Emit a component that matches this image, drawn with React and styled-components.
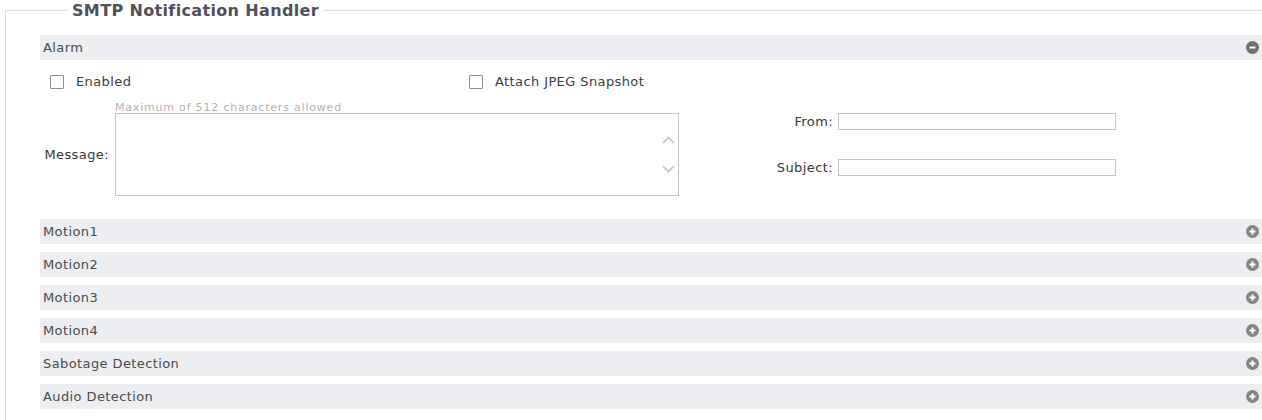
import React from "react";
import styled, { createGlobalStyle } from "styled-components";

const Global = createGlobalStyle`
  html, body {
    margin: 0;
    padding: 0;
    background: #fff;
    overflow: hidden;
  }
  body {
    font-family: "DejaVu Sans", Verdana, sans-serif;
    font-size: 13px;
    letter-spacing: 0.4px;
    color: #444;
  }
`;

const Frame = styled.fieldset`
  margin: 1px 0 0 5px;
  padding: 15px 0 20px 34px;
  border: 1px solid #dcdcdc;
  border-right: none;
  border-bottom: none;
  min-width: 0;
`;

const Legend = styled.legend`
  margin-left: 28px;
  padding: 0 4px;
  font-size: 16px;
  font-weight: bold;
  line-height: 19px;
  color: #50505a;
  letter-spacing: 0.35px;
`;

const Section = styled.section`
  margin-bottom: 8px;
`;

const Bar = styled.div`
  height: 25px;
  display: flex;
  align-items: center;
  justify-content: space-between;
  padding: 0 3px 0 3px;
  background: #eceef1;
  color: #4a4a4a;
`;

const Title = styled.span`
  line-height: 25px;
`;

const Toggle = ({ open }) => (
  <svg width="13" height="13" viewBox="0 0 13 13" aria-hidden="true">
    <circle cx="6.5" cy="6.5" r="6.5" fill={open ? "#707070" : "#858585"} />
    <path d="M3.5 6.5h6" stroke="#fff" strokeWidth="2" />
    {!open && <path d="M6.5 3.5v6" stroke="#fff" strokeWidth="2" />}
  </svg>
);

const Body = styled.div`
  padding: 15px 0 15px 10px;
`;

const CheckRow = styled.div`
  display: grid;
  grid-template-columns: 419px auto;
  align-items: center;
`;

const CheckLabel = styled.label`
  display: flex;
  align-items: center;
  gap: 12px;
  color: #3c3c3c;
  line-height: 14px;
`;

const Box = styled.input.attrs({ type: "checkbox" })`
  appearance: none;
  margin: 0;
  width: 14px;
  height: 14px;
  border: 1px solid #8e8e8e;
  border-radius: 1px;
  background: #fff;
`;

const Fields = styled.div`
  display: grid;
  grid-template-columns: 65px 564px 437px;
  margin-top: 13px;
`;

const MessageLabel = styled.label`
  grid-column: 1;
  grid-row: 2;
  align-self: center;
  justify-self: end;
  margin-right: 6px;
  color: #383838;
  white-space: nowrap;
`;

const Hint = styled.div`
  grid-column: 2;
  grid-row: 1;
  font-size: 11px;
  line-height: 11px;
  letter-spacing: 0.8px;
  color: #b4b4b4;
`;

const MessageBox = styled.div`
  grid-column: 2;
  grid-row: 2;
  height: 81px;
  display: flex;
  border: 1px solid #c4c4c4;
  background: #fff;
`;

const TextArea = styled.textarea`
  flex: 1;
  border: none;
  resize: none;
  outline: none;
  font: inherit;
  padding: 2px 4px;
`;

const Gutter = styled.div`
  width: 20px;
  display: flex;
  flex-direction: column;
  align-items: center;
  justify-content: center;
  gap: 21px;
`;

const Chevron = ({ up }) => (
  <svg width="13" height="8" viewBox="0 0 13 8" aria-hidden="true">
    <path
      d={up ? "M1 7l5.5-5.5L12 7" : "M1 1l5.5 5.5L12 1"}
      fill="none"
      stroke="#c2c2c2"
      strokeWidth="1.6"
    />
  </svg>
);

const Side = styled.div`
  grid-column: 3;
  grid-row: 2;
  display: grid;
  grid-template-columns: 159px 278px;
  grid-template-rows: 17px 17px;
  row-gap: 29px;
  align-items: center;
`;

const SideLabel = styled.label`
  text-align: right;
  padding-right: 5px;
  color: #383838;
`;

const TextInput = styled.input.attrs({ type: "text" })`
  box-sizing: border-box;
  width: 278px;
  height: 17px;
  margin: 0;
  border: 1px solid #c4c4c4;
  padding: 0 3px;
  font: inherit;
`;

const others = [
  "Motion1",
  "Motion2",
  "Motion3",
  "Motion4",
  "Sabotage Detection",
  "Audio Detection",
];

export default function App() {
  return (
    <>
      <Global />
      <Frame>
        <Legend>SMTP Notification Handler</Legend>
        <Section>
          <Bar>
            <Title>Alarm</Title>
            <Toggle open />
          </Bar>
          <Body>
            <CheckRow>
              <CheckLabel>
                <Box />
                Enabled
              </CheckLabel>
              <CheckLabel>
                <Box />
                Attach JPEG Snapshot
              </CheckLabel>
            </CheckRow>
            <Fields>
              <Hint>Maximum of 512 characters allowed</Hint>
              <MessageLabel>Message:</MessageLabel>
              <MessageBox>
                <TextArea maxLength={512} />
                <Gutter>
                  <Chevron up />
                  <Chevron />
                </Gutter>
              </MessageBox>
              <Side>
                <SideLabel>From:</SideLabel>
                <TextInput />
                <SideLabel>Subject:</SideLabel>
                <TextInput />
              </Side>
            </Fields>
          </Body>
        </Section>
        {others.map((name) => (
          <Section key={name}>
            <Bar>
              <Title>{name}</Title>
              <Toggle />
            </Bar>
          </Section>
        ))}
      </Frame>
    </>
  );
}
